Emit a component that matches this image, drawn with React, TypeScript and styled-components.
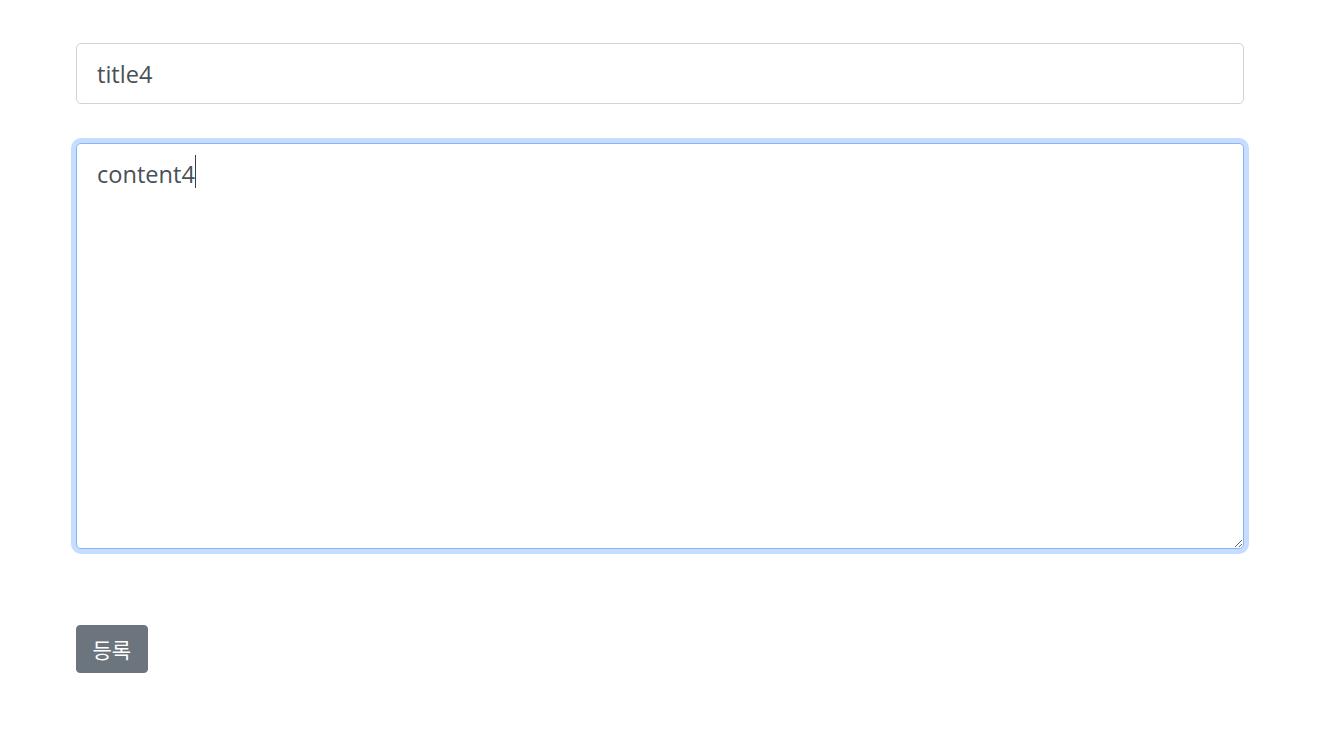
import { useEffect, useRef, useState } from "react";
import styled, { createGlobalStyle, css } from "styled-components";

const FONT = `"Segoe UI", "Open Sans", "Noto Sans CJK KR", sans-serif`;

const GlobalStyle = createGlobalStyle`
  body {
    margin: 0;
    background: #fff;
    font-family: ${FONT};
  }
`;

const Page = styled.main`
  padding: 43px 78px 0 76px;
`;

const Form = styled.form`
  display: flex;
  flex-direction: column;
`;

const fieldBase = css`
  box-sizing: border-box;
  width: 100%;
  border: 1px solid #ced4da;
  border-radius: 5px;
  padding: 15px 20px 14px;
  font-family: ${FONT};
  font-size: 23.6px;
  line-height: 30px;
  color: #495057;
  background: #fff;
  outline: none;
`;

const focusRing = css`
  border-color: #86b7fe;
  box-shadow: 0 0 0 5px rgba(13, 110, 253, 0.23);
`;

const TitleInput = styled.input`
  ${fieldBase}
  height: 61px;
  &:focus {
    ${focusRing}
  }
`;

const AreaWrap = styled.div`
  position: relative;
  margin-top: 39px;
`;

const ContentArea = styled.textarea<{ $active: boolean }>`
  ${fieldBase}
  display: block;
  height: 406px;
  padding-top: 15px;
  resize: vertical;
  caret-color: transparent;
  ${({ $active }) => $active && focusRing}
  &:focus {
    ${focusRing}
  }
`;

const Caret = styled.span`
  position: absolute;
  top: 12px;
  width: 1px;
  height: 33px;
  background: #3a3f44;
  pointer-events: none;
`;

const Actions = styled.div`
  display: flex;
  margin-top: 76px;
`;

const SubmitButton = styled.button`
  box-sizing: border-box;
  height: 48px;
  padding: 8px 15.5px;
  border: 1px solid #6c757d;
  border-radius: 4px;
  background: #6c757d;
  color: #fff;
  font-family: "Noto Sans CJK KR", "Open Sans", sans-serif;
  font-size: 21px;
  line-height: 30px;
  cursor: pointer;
`;

export default function App() {
    const [title, setTitle] = useState("title4");
    const [content, setContent] = useState("content4");
    const [caretLeft, setCaretLeft] = useState(98);
    const areaRef = useRef<HTMLTextAreaElement>(null);

    useEffect(() => {
        const el = areaRef.current;
        if (el) {
            el.focus();
            el.setSelectionRange(el.value.length, el.value.length);
        }
    }, []);

    useEffect(() => {
        const ctx = document.createElement("canvas").getContext("2d");
        if (ctx) {
            ctx.font = `23.6px ${FONT}`;
            const lastLine = content.split("\n").pop() ?? "";
            setCaretLeft(21 + ctx.measureText(lastLine).width);
        }
    }, [content]);

    return (
        <Page>
            <GlobalStyle />
            <Form onSubmit={(e) => e.preventDefault()}>
                <TitleInput value={title} onChange={(e) => setTitle(e.target.value)} />
                <AreaWrap>
                    <ContentArea
                        ref={areaRef}
                        $active
                        value={content}
                        onChange={(e) => setContent(e.target.value)}
                    />
                    <Caret style={{ left: caretLeft }} />
                </AreaWrap>
                <Actions>
                    <SubmitButton type="submit">등록</SubmitButton>
                </Actions>
            </Form>
        </Page>
    );
}
